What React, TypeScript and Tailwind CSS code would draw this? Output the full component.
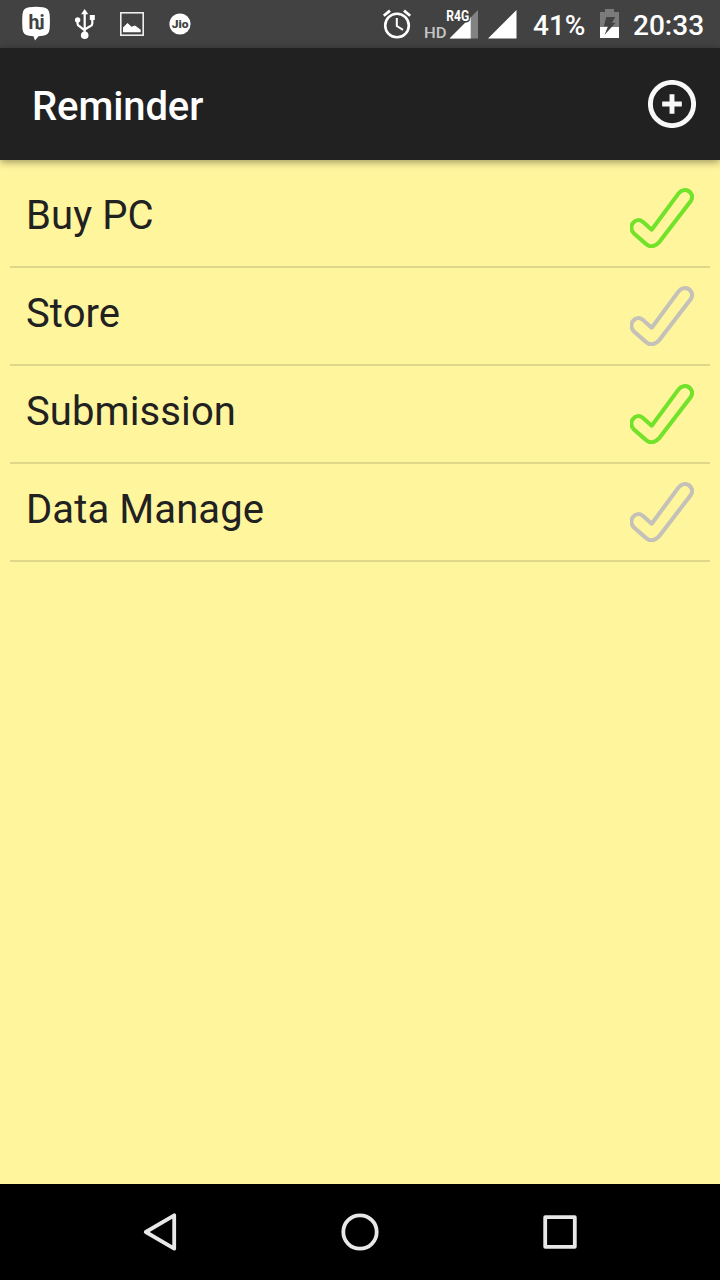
import React from "react";

type Reminder = { title: string; done: boolean };

const reminders: Reminder[] = [
  { title: "Buy PC", done: true },
  { title: "Store", done: false },
  { title: "Submission", done: true },
  { title: "Data Manage", done: false },
];

function HikeIcon() {
  return (
    <svg className="h-12 w-7" viewBox="22 0 28 48">
      <path d="M29 7.3Q36 6.4 43 7.3Q49 8 49.6 14Q50.2 21.5 49.6 29Q49 35 43 35.8L38.5 36.2L35 40.5L33.5 36.2L29 35.8Q23 35 22.5 29Q21.9 21.5 22.5 14Q23 8 29 7.3Z" fill="#fff" />
      <text x="28.6" y="28.8" fontFamily="Roboto" fontSize="19.5" fontWeight="700" fill="#424242" textLength="16">hi</text>
      <path d="M36.8 26.5Q39 30.2 42.2 27.4" fill="none" stroke="#424242" strokeWidth="2.4" />
    </svg>
  );
}

function UsbIcon() {
  return (
    <svg className="ml-[25px] h-12 w-5" viewBox="75 0 20 48">
      <g fill="none" stroke="#fff" strokeWidth="2.2">
        <path d="M84.7 12V36M77.5 20V23.5Q77.5 25.5 79.5 26.3L84.7 30.3M92.3 18V23.5Q92.3 25.3 90.5 26L84.7 29.5" />
      </g>
      <g fill="#fff">
        <path d="M84.7 9L88.3 14.2H81.1Z" />
        <circle cx="77.6" cy="20" r="2.7" />
        <rect x="89.8" y="15" width="5" height="5" />
        <circle cx="84.7" cy="35.2" r="3.8" />
      </g>
    </svg>
  );
}

function PictureIcon() {
  return (
    <svg className="ml-[25px] h-12 w-6" viewBox="120 0 24 48">
      <rect x="120.8" y="12.8" width="22.4" height="22.4" fill="none" stroke="#ededed" strokeWidth="1.6" />
      <path d="M123 32.3V27.5L127.5 23L131.5 26.8L135 25.5L140.7 29.8V32.3Z" fill="#fff" />
    </svg>
  );
}

function JioIcon() {
  return (
    <svg className="ml-[25px] h-12 w-[22px]" viewBox="169 0 22 48">
      <circle cx="180" cy="24" r="10.6" fill="#fff" />
      <text x="171.8" y="28" fontFamily="Roboto" fontSize="11.5" fontWeight="900" fill="#424242" textLength="16.8" lengthAdjust="spacingAndGlyphs">Jio</text>
    </svg>
  );
}

function AlarmIcon() {
  return (
    <svg className="h-12 w-[30px]" viewBox="382 0 30 48">
      <g fill="none" stroke="#fff" strokeWidth="2.6">
        <circle cx="397" cy="25.5" r="11.8" />
        <path d="M396.8 18V26L403 29.8" strokeWidth="2" />
        <path d="M383.8 15.8L390 10.6M404 10.6L410.2 15.8" strokeWidth="2.8" />
      </g>
    </svg>
  );
}

function SignalIcons() {
  return (
    <svg className="ml-3 h-12 w-[93px]" viewBox="424 0 93 48">
      <text x="424" y="37.8" fontFamily="Roboto" fontSize="15.5" fontWeight="500" fill="#c6c6c6" textLength="22.6" lengthAdjust="spacingAndGlyphs">HD</text>
      <path d="M449.5 38.5L478 10V38.5Z" fill="#828282" />
      <path d="M449.5 38.5L470.7 17.3V38.5Z" fill="#fff" />
      <g fontFamily="Roboto" fontSize="13.8" fontWeight="700">
        <text x="446.3" y="20.5" textLength="22.8" lengthAdjust="spacingAndGlyphs" stroke="#424242" strokeWidth="3" fill="#424242">R4G</text>
        <text x="446.3" y="20.5" textLength="22.8" lengthAdjust="spacingAndGlyphs" fill="#fff">R4G</text>
      </g>
      <path d="M488 38.5L516.5 10V38.5Z" fill="#fff" />
    </svg>
  );
}

function BatteryIcon() {
  return (
    <svg className="h-12 w-5" viewBox="600 0 20 48">
      <path d="M605 9H614V12H619V38H600V12H605Z" fill="#7b7b7b" />
      <path d="M600 27H619V38H600Z" fill="#fff" />
      <path d="M606.3 17H615.3L611.8 22.8H615.6L604.6 34.8L608 26.3H603.8Z" fill="#424242" />
    </svg>
  );
}

function CheckIcon({ done }: { done: boolean }) {
  return (
    <svg className="h-[60px] w-16 shrink-0" viewBox="0 0 64 60">
      <path
        d="M21.7 41.7L48.6 5.4C54.2-2.2 66 4.4 60.8 13L29.5 53.8Q22 62 15.3 55.4L3.7 45.2C-2.6 38 5.6 28.2 12.8 33.8Z"
        fill="none"
        stroke={done ? "#72e22a" : "#c4c1b8"}
        strokeWidth="4.1"
        strokeLinejoin="round"
      />
    </svg>
  );
}

export default function App() {
  return (
    <div className="flex h-[1280px] w-[720px] flex-col overflow-hidden bg-[#fff59d] font-['Roboto',sans-serif]">
      <div className="flex h-12 shrink-0 items-center bg-[#424242] pr-4 pl-[22px] text-white">
        <HikeIcon />
        <UsbIcon />
        <PictureIcon />
        <JioIcon />
        <div className="ml-auto flex items-center text-[28px] leading-[48px] font-medium">
          <AlarmIcon />
          <SignalIcons />
          <span className="mt-[3px] ml-4 w-[52px] whitespace-nowrap">41%</span>
          <span className="ml-[15px] flex"><BatteryIcon /></span>
          <span className="mt-[3px] ml-[13px] w-[71px] whitespace-nowrap">20:33</span>
        </div>
      </div>

      <header className="z-10 flex h-28 shrink-0 items-center justify-between bg-[#212121] pr-6 pl-8 shadow-[0_2px_8px_rgba(0,0,0,0.4)]">
        <h1 className="pt-1.5 text-[40px] leading-[48px] font-medium tracking-[-0.1px] text-white">Reminder</h1>
        <button type="button" aria-label="Add reminder">
          <svg className="size-12" viewBox="0 0 48 48" fill="none" stroke="#f8f8f8">
            <circle cx="24" cy="24" r="21.6" strokeWidth="4.9" />
            <path d="M14.2 24H33.8M24 14.2V33.8" strokeWidth="4.9" />
          </svg>
        </button>
      </header>

      <ul className="flex-1 px-2.5 pt-2.5">
        {reminders.map((item) => (
          <li key={item.title} className="flex h-[98px] items-center justify-between border-b-2 border-[#e0d78a] px-4">
            <span className="pb-1 text-[40px] leading-[48px] tracking-[0.1px] text-[#212121]">{item.title}</span>
            <CheckIcon done={item.done} />
          </li>
        ))}
      </ul>

      <nav className="flex h-24 shrink-0 items-center justify-center gap-[152px] bg-black">
        <svg className="size-12" viewBox="136 1208 48 48" fill="none" stroke="#e8e8e8" strokeWidth="3.8" strokeLinejoin="round">
          <path d="M174.2 1215.3V1248.7L145.8 1232Z" />
        </svg>
        <svg className="size-12" viewBox="0 0 48 48" fill="none" stroke="#e8e8e8" strokeWidth="3.8">
          <circle cx="24" cy="24" r="16.7" />
        </svg>
        <svg className="size-12" viewBox="0 0 48 48" fill="none" stroke="#e8e8e8" strokeWidth="3.8" strokeLinejoin="round">
          <rect x="9.2" y="9.2" width="29.6" height="29.6" />
        </svg>
      </nav>
    </div>
  );
}
